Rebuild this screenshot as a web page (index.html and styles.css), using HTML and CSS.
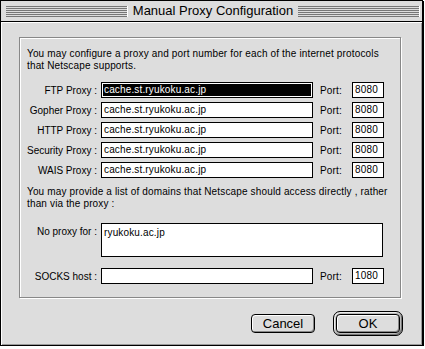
FILE: index.html
```html
<!DOCTYPE html>
<html lang="en">
<head>
  <meta charset="UTF-8" />
  <title>Manual Proxy Configuration</title>
  <link rel="stylesheet" href="styles.css">
</head>
<body>
  <div class="window">
    <div class="titlebar">
      <span class="stripes"></span>
      <span class="title">Manual Proxy Configuration</span>
      <span class="stripes"></span>
    </div>

    <div class="content">
      <div class="group">
        <p class="note">You may configure a proxy and port number for each of the internet protocols<br>that Netscape supports.</p>

        <div class="rows">
          <div class="row">
            <span class="label">FTP Proxy :</span>
            <span class="field selected">cache.st.ryukoku.ac.jp</span>
            <span class="port-label">Port:</span>
            <span class="port">8080</span>
          </div>
          <div class="row">
            <span class="label">Gopher Proxy :</span>
            <span class="field">cache.st.ryukoku.ac.jp</span>
            <span class="port-label">Port:</span>
            <span class="port">8080</span>
          </div>
          <div class="row">
            <span class="label">HTTP Proxy :</span>
            <span class="field">cache.st.ryukoku.ac.jp</span>
            <span class="port-label">Port:</span>
            <span class="port">8080</span>
          </div>
          <div class="row">
            <span class="label">Security Proxy :</span>
            <span class="field">cache.st.ryukoku.ac.jp</span>
            <span class="port-label">Port:</span>
            <span class="port">8080</span>
          </div>
          <div class="row">
            <span class="label">WAIS Proxy :</span>
            <span class="field">cache.st.ryukoku.ac.jp</span>
            <span class="port-label">Port:</span>
            <span class="port">8080</span>
          </div>
        </div>

        <p class="note note-2">You may provide a list of domains that Netscape should access directly , rather<br>than via the proxy :</p>

        <div class="row area-row">
          <span class="label">No proxy for :</span>
          <span class="field area">ryukoku.ac.jp</span>
        </div>

        <div class="row socks-row">
          <span class="label">SOCKS host :</span>
          <span class="field"></span>
          <span class="port-label">Port:</span>
          <span class="port">1080</span>
        </div>
      </div>

      <div class="buttons">
        <span class="btn">Cancel</span>
        <span class="default-ring"><span class="btn">OK</span></span>
      </div>
    </div>
  </div>
</body>
</html>
```

FILE: styles.css
```css
body { margin: 0; background: #fff; font-family: "Liberation Sans", Arial, sans-serif; color: #000; }

.window {
  width: 421px;
  height: 344px;
  border: 1px solid #000;
  box-shadow: 1px 1px 0 #000;
  background: #ddd;
  display: flex;
  flex-direction: column;
}

.titlebar {
  height: 20px;
  border-bottom: 1px solid #000;
  display: flex;
  align-items: center;
  padding: 0 2px 0 5px;
}
.stripes {
  flex: 1;
  height: 11px;
  background: repeating-linear-gradient(#777 0 1px, #ddd 1px 2px);
  border-right: 1px solid #fff;
}
.title { font-size: 13px; margin: 0 5px; line-height: 20px; }

.content {
  flex: 1;
  box-shadow: inset 1px 1px 0 #fff, inset -1px -1px 0 #999;
  padding: 15px 21px 0 18px;
}

.group {
  border: 1px solid #888;
  box-shadow: inset 1px 1px 0 #fff, 1px 1px 0 #fff;
  padding: 10px 0 13px 7px;
  font-size: 10px;
  letter-spacing: 0.15px;
}

.note { margin: 0; line-height: 12px; }
.note-2 { margin: 8px 0 13px; }

.rows { margin-top: 10px; display: flex; flex-direction: column; gap: 4px; }

.row { display: flex; align-items: center; height: 16px; }
.label { width: 70px; text-align: right; padding-right: 4px; flex: none; white-space: nowrap; letter-spacing: 0; }
.field {
  width: 206px;
  height: 14px;
  line-height: 14px;
  padding: 0 2px;
  border: 1px solid #000;
  background: #fff;
  flex: none;
  white-space: nowrap;
}
.field.selected { background: #000; color: #fff; box-shadow: inset 0 0 0 1px #fff; }
.port-label { margin-left: 7px; width: 32px; flex: none; }
.port {
  width: 27px;
  height: 14px;
  line-height: 14px;
  padding: 0 1px 0 2px;
  border: 1px solid #000;
  background: #fff;
}

.area-row { height: 34px; align-items: flex-start; }
.area-row .label { line-height: 18px; }
.field.area { width: 276px; height: 32px; line-height: 18px; }
.socks-row { margin-top: 11px; }

.buttons {
  display: flex;
  justify-content: flex-end;
  align-items: center;
  gap: 18px;
  margin-top: 13px;
  margin-right: -2px;
}
.btn {
  display: inline-block;
  width: 62px;
  height: 17px;
  line-height: 17px;
  text-align: center;
  font-size: 13px;
  border: 1px solid #000;
  border-radius: 4px;
  background: #ddd;
  box-shadow: inset 1px 1px 0 #fff, inset -1px -1px 0 #888;
}
.default-ring {
  display: inline-block;
  padding: 2px;
  border: 1px solid #000;
  border-radius: 7px;
  background: #bbb;
  box-shadow: inset 1px 1px 0 #eee, inset -1px -1px 0 #777;
}
```
